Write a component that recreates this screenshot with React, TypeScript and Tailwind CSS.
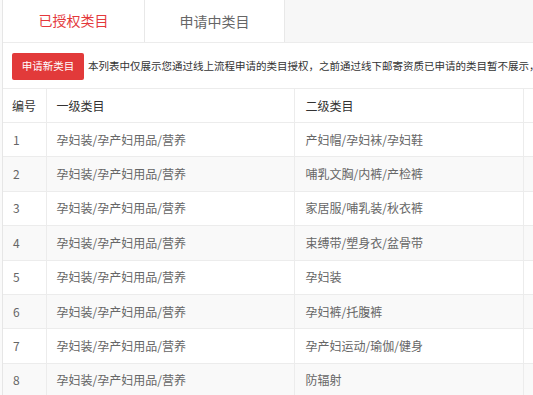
import React from "react";

const ROWS: [string, string][] = [
  ["孕妇装/孕产妇用品/营养", "产妇帽/孕妇袜/孕妇鞋"],
  ["孕妇装/孕产妇用品/营养", "哺乳文胸/内裤/产检裤"],
  ["孕妇装/孕产妇用品/营养", "家居服/哺乳装/秋衣裤"],
  ["孕妇装/孕产妇用品/营养", "束缚带/塑身衣/盆骨带"],
  ["孕妇装/孕产妇用品/营养", "孕妇装"],
  ["孕妇装/孕产妇用品/营养", "孕妇裤/托腹裤"],
  ["孕妇装/孕产妇用品/营养", "孕产妇运动/瑜伽/健身"],
  ["孕妇装/孕产妇用品/营养", "防辐射"],
];

export default function App() {
  return (
    <div
      className="w-[533px] h-[395px] overflow-hidden bg-[#fafafa] pl-[2px]"
      style={{ fontFamily: '"Noto Sans CJK SC", "Noto Sans", sans-serif' }}
    >
      <div className="h-full bg-white border-l border-[#e6e6e6] flex flex-col">
        {/* Tabs */}
        <div className="flex h-[43px] shrink-0 bg-[#f7f7f7] border-b border-[#ececec]">
          <div className="w-[141px] bg-white flex items-center justify-center text-[14px] text-[#e4393c] pb-[1px]">
            已授权类目
          </div>
          <div className="w-[141px] bg-white border-x border-[#e8e8e8] flex items-center justify-center text-[14px] text-[#666]">
            申请中类目
          </div>
        </div>

        {/* Notice row */}
        <div className="flex items-center h-[45px] pt-[1px] pl-[9px] shrink-0 whitespace-nowrap overflow-hidden">
          <button className="w-[72px] h-[27px] rounded-[2px] bg-[#e23a3a] text-white text-[10.5px] shrink-0">
            申请新类目
          </button>
          <span className="ml-[4px] text-[10.5px] text-[#333]">
            本列表中仅展示您通过线上流程申请的类目授权，之前通过线下邮寄资质已申请的类目暂不展示，
          </span>
        </div>

        {/* Table */}
        <table className="border-collapse table-fixed w-[540px] text-[12px]">
          <colgroup>
            <col className="w-[43px]" />
            <col className="w-[248px]" />
            <col className="w-[229px]" />
            <col />
          </colgroup>
          <thead>
            <tr className="h-[34px] border-y border-[#ececec] text-[#333]">
              <th className="text-left font-normal pl-[9px]">编号</th>
              <th className="text-left font-normal pl-[10px] border-l border-[#ececec]">一级类目</th>
              <th className="text-left font-normal pl-[11px] border-l border-[#ececec]">二级类目</th>
              <th className="border-l border-[#ececec]"></th>
            </tr>
          </thead>
          <tbody className="text-[#666]">
            {ROWS.map(([a, b], i) => (
              <tr
                key={i}
                className={`h-[34.4px] border-b border-[#ececec] ${i % 2 === 1 ? "bg-[#f9f9f9]" : "bg-white"}`}
              >
                <td className="pl-[10px]">{i + 1}</td>
                <td className="pl-[10px] border-l border-[#ececec]">{a}</td>
                <td className="pl-[11px] border-l border-[#ececec]">{b}</td>
                <td className="border-l border-[#ececec]"></td>
              </tr>
            ))}
          </tbody>
        </table>
      </div>
    </div>
  );
}
